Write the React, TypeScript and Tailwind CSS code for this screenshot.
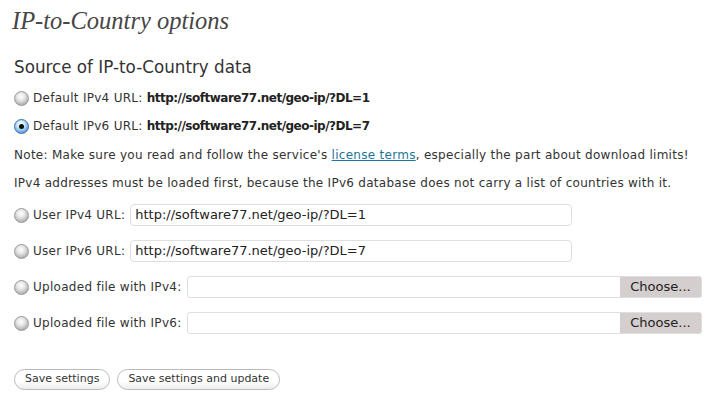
import React from "react"

const font = "font-['DejaVu_Sans',Verdana,sans-serif]"

function Radio({ checked }: { checked?: boolean }) {
  return (
    <span
      className={
        "relative inline-block w-[15px] h-[15px] shrink-0 rounded-full border " +
        (checked
          ? "border-[#3b6ea5] bg-[radial-gradient(circle_at_45%_35%,#ffffff_0%,#d4ecfc_30%,#5d9fe0_75%,#2f6cb0_100%)]"
          : "border-[#9a9a9a] bg-[radial-gradient(circle_at_45%_35%,#ffffff_0%,#e6e6e6_35%,#b0b0b0_75%,#8a8a8a_100%)]")
      }
    >
      {checked && <span className="absolute left-[4px] top-[4px] w-[5px] h-[5px] rounded-full bg-[#0d0d0d]" />}
    </span>
  )
}

function TextRow({ label, value }: { label: string; value: string }) {
  return (
    <div className="flex items-center h-[36px]">
      <Radio />
      <span className="ml-[4px]">{label}</span>
      <div className="ml-[5px] w-[442px] h-[22px] rounded-[4px] border border-[#dfdfdf] bg-white flex items-center px-[4px] text-[13px] tracking-normal text-[#222]">
        {value}
      </div>
    </div>
  )
}

function FileRow({ label }: { label: string }) {
  return (
    <div className="flex items-center h-[36px]">
      <Radio />
      <span className="ml-[4px]">{label}</span>
      <div className="ml-[5px] mr-[5px] flex-1 h-[22px] rounded-[3px] border border-[#dfdfdf] bg-white flex justify-end">
        <div className="w-[81px] bg-[#d4cece] flex items-center justify-center text-[13px] tracking-normal text-[#222]">Choose...</div>
      </div>
    </div>
  )
}

export default function App() {
  return (
    <div className={"w-[721px] h-[401px] bg-white text-[#333] text-[12px] tracking-[0.28px] px-[14px] " + font}>
      <h2 className="pt-[6px] leading-[30px] text-[24.5px] tracking-normal italic text-[#464646] font-['Georgia','Liberation_Serif',serif] -ml-[2px]">
        IP-to-Country options
      </h2>
      <h3 className="mt-[21px] leading-[20px] text-[16.75px] tracking-normal">Source of IP-to-Country data</h3>
      <div className="mt-[7px]">
        <div className="flex items-center h-[28px]">
          <Radio />
          <span className="ml-[4px]">Default IPv4 URL: <b className="tracking-[-0.5px] text-[#222]">http://software77.net/geo-ip/?DL=1</b></span>
        </div>
        <div className="flex items-center h-[28px]">
          <Radio checked />
          <span className="ml-[4px]">Default IPv6 URL: <b className="tracking-[-0.5px] text-[#222]">http://software77.net/geo-ip/?DL=7</b></span>
        </div>
        <p className="h-[29px] leading-[30px]">
          Note: Make sure you read and follow the service's{" "}
          <a className="text-[#21759b] underline" href="#">license terms</a>, especially the part about download limits!
        </p>
        <p className="h-[28px] leading-[28px]">
          IPv4 addresses must be loaded first, because the IPv6 database does not carry a list of countries with it.
        </p>
      </div>
      <div>
        <TextRow label="User IPv4 URL:" value="http://software77.net/geo-ip/?DL=1" />
        <TextRow label="User IPv6 URL:" value="http://software77.net/geo-ip/?DL=7" />
        <FileRow label="Uploaded file with IPv4:" />
        <FileRow label="Uploaded file with IPv6:" />
      </div>
      <div className="mt-[28px] flex gap-[7px]">
        <button className="h-[21px] px-[10px] rounded-full border border-[#bbb] bg-[linear-gradient(#ffffff_60%,#ececec)] text-[11px] tracking-normal text-[#333]">
          Save settings
        </button>
        <button className="h-[21px] px-[10px] rounded-full border border-[#bbb] bg-[linear-gradient(#ffffff_60%,#ececec)] text-[11px] tracking-normal text-[#333]">
          Save settings and update
        </button>
      </div>
    </div>
  )
}
